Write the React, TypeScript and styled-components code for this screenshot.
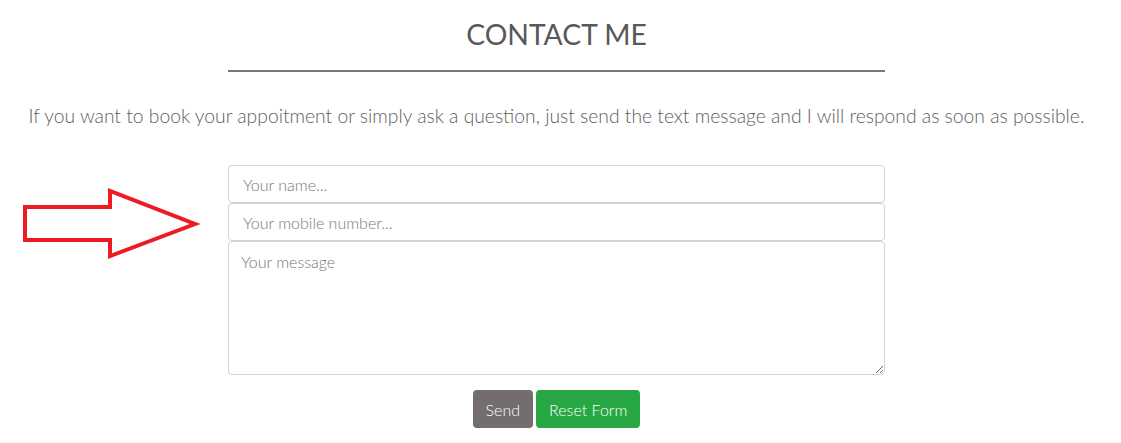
import React from "react";
import styled, { createGlobalStyle } from "styled-components";

const GlobalStyle = createGlobalStyle`
  html, body {
    margin: 0;
    padding: 0;
    background: #ffffff;
  }
  body {
    font-family: Lato, "Open Sans", "Liberation Sans", sans-serif;
    font-weight: 300;
    color: #666;
  }
  * { box-sizing: border-box; }
`;

const Page = styled.main`
  width: 1113px;
  padding-top: 17px;
  display: flex;
  flex-direction: column;
  align-items: center;
  position: relative;
`;

const Heading = styled.h2`
  margin: 0;
  font-size: 28.3px;
  line-height: 35px;
  font-weight: 400;
  color: #585858;
`;

const Rule = styled.hr`
  width: 657px;
  margin: 18px 0 0;
  border: 0;
  border-top: 2px solid #777;
`;

const Lead = styled.p`
  margin: 29px 0 0;
  font-size: 19.3px;
  line-height: 30px;
  font-weight: 300;
  color: #5e5e5e;
  text-align: center;
  white-space: nowrap;
`;

const Form = styled.form`
  width: 657px;
  margin-top: 34px;
  display: flex;
  flex-direction: column;
  align-items: stretch;
  position: relative;
`;

const Field = styled.input`
  display: block;
  width: 100%;
  height: 38px;
  padding: 6px 14px;
  font-family: inherit;
  font-size: 16px;
  font-weight: 300;
  color: #495057;
  background: #fff;
  border: 1px solid #ced4da;
  border-radius: 4px;
  outline: none;
  &::placeholder {
    color: #74787c;
    opacity: 1;
  }
`;

const Message = styled.textarea`
  display: block;
  width: 100%;
  height: 134px;
  padding: 10px 12px;
  font-family: inherit;
  font-size: 16px;
  font-weight: 300;
  color: #495057;
  background: #fff;
  border: 1px solid #ced4da;
  border-radius: 4px;
  outline: none;
  resize: vertical;
  &::placeholder {
    color: #74787c;
    opacity: 1;
  }
`;

const Actions = styled.div`
  display: flex;
  justify-content: center;
  gap: 3px;
  margin-top: 15px;
`;

const Button = styled.button<{ $tone: "gray" | "green" }>`
  height: 38px;
  padding: 0 12px;
  font-family: inherit;
  font-size: 16px;
  font-weight: 300;
  color: #fff;
  border: 1px solid transparent;
  border-radius: 4px;
  background: ${(p) => (p.$tone === "gray" ? "#736d6f" : "#28a745")};
  cursor: pointer;
`;

const Arrow = styled.svg`
  position: absolute;
  left: -205px;
  top: 24px;
  overflow: visible;
`;

export default function App() {
  return (
    <>
      <GlobalStyle />
      <Page>
        <Heading>CONTACT ME</Heading>
        <Rule />
        <Lead>
          If you want to book your appoitment or simply ask a question, just send the text message and I will respond as soon as possible.
        </Lead>
        <Form onSubmit={(e) => e.preventDefault()}>
          <Arrow width="180" height="72" viewBox="0 0 180 72">
            <polygon
              points="2,18 87,18 87,2 172,35 87,67 87,51 2,51"
              fill="none"
              stroke="#ed1c24"
              strokeWidth="4"
              strokeLinejoin="miter"
            />
          </Arrow>
          <Field type="text" placeholder="Your name..." />
          <Field type="text" placeholder="Your mobile number..." />
          <Message placeholder="Your message" />
          <Actions>
            <Button type="submit" $tone="gray">Send</Button>
            <Button type="reset" $tone="green">Reset Form</Button>
          </Actions>
        </Form>
      </Page>
    </>
  );
}
